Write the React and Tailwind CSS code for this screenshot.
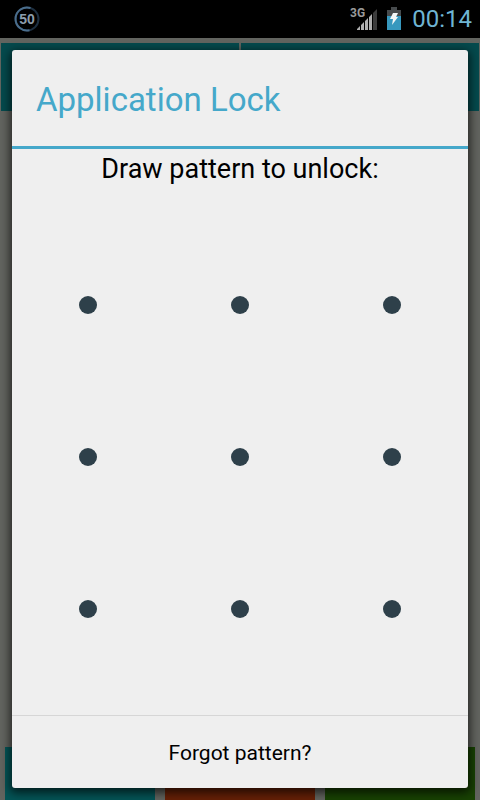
import React, { useState } from 'react';

const NODES = [1, 2, 3, 4, 5, 6, 7, 8, 9];

function StatusBar() {
    return (
        <header className="relative z-10 flex h-[38px] items-center justify-between bg-black px-2">
            {/* BATTERY PERCENT RING */}
            <svg className="ml-1 h-7 w-7" viewBox="0 0 28 28" fill="none" role="img" aria-label="Battery level">
                <circle cx="15" cy="14" r="11.5" stroke="#1d2f40" strokeWidth="2" />
                <path d="M18.5 3A11.5 11.5 0 1 0 17.5 25.2" stroke="#4a6d8c" strokeWidth="2" />
                <text x="15" y="19" textAnchor="middle" fontSize="14" fontWeight="700" fontFamily="'Liberation Sans', sans-serif" fill="#8c9cab">50</text>
            </svg>

            <div className="flex items-center">
                {/* SIGNAL */}
                <svg className="h-7 w-8" viewBox="0 0 32 28" role="img" aria-label="Mobile signal">
                    <text x="4" y="12" fontSize="12" fontWeight="700" fontFamily="Roboto, sans-serif" fill="#9a9a9a">3G</text>
                    <path d="M11 25v-1l3-3v4zM15 25v-5l3-3v8zM19 25v-9l3-3v12zM23 25V12l3-3v16z" fill="#b0b0b0" />
                    <path d="M27 25V8l4-4v21z" fill="#3c3c3c" />
                </svg>

                {/* BATTERY */}
                <svg className="ml-2 h-7 w-4" viewBox="0 0 16 28" role="img" aria-label="Battery charging">
                    <path d="M5 2h6v3h4v10H1V5h4z" fill="#474b4d" />
                    <path d="M1 11h14v14H1z" fill="#3798be" />
                    <path d="M7 8h5l-2 4h2l-6 8 1-6H4z" fill="#f4f8f8" />
                </svg>

                <time className="ml-[10px] font-[Roboto,sans-serif] text-2xl text-[#6fb5d3]">00:14</time>
            </div>
        </header>
    );
}

// Dimmed screen that stays visible around the dialog
function Backdrop() {
    return (
        <div className="flex flex-1 flex-col justify-between bg-[#62645f] pt-[5px]" aria-hidden="true">
            <div className="flex h-[68px] gap-[2px] px-px">
                <div className="flex-1 bg-[#054a4d]" />
                <div className="flex-1 bg-[#054a4d]" />
            </div>
            <div className="flex h-[53px] gap-[10px] px-[5px]">
                <div className="flex-1 bg-[#045456]" />
                <div className="flex-1 bg-[#662006]" />
                <div className="flex-1 bg-[#184203]" />
            </div>
        </div>
    );
}

function PatternDialog() {
    const [pattern, setPattern] = useState([]);

    const addNode = (node) => {
        setPattern((prev) => (prev.includes(node) ? prev : [...prev, node]));
    };

    return (
        <section
            role="dialog"
            aria-labelledby="lock-title"
            className="flex w-full flex-col overflow-hidden rounded-[3px] bg-[#efefef] shadow-[0_3px_10px_2px_rgba(0,0,0,0.65)]"
        >
            {/* TITLE */}
            <div className="flex h-[99px] items-center border-b-[3px] border-[#45a8ca] px-6 pt-1">
                <h1 id="lock-title" className="text-[33px] leading-10 text-[#45a8ca]">Application Lock</h1>
            </div>

            {/* PATTERN */}
            <div className="flex flex-1 flex-col justify-between pb-[30px]">
                <p className="text-center text-[27px] leading-10 text-black">Draw pattern to unlock:</p>
                <div className="grid aspect-square w-full grid-cols-3">
                    {NODES.map((node) => (
                        <button
                            key={node}
                            type="button"
                            aria-label={`Dot ${node}`}
                            aria-pressed={pattern.includes(node)}
                            onClick={() => addNode(node)}
                            className="flex items-center justify-center"
                        >
                            <span className="h-[18px] w-[18px] rounded-full bg-[#2e404a]" />
                        </button>
                    ))}
                </div>
            </div>

            {/* FOOTER */}
            <button
                type="button"
                onClick={() => setPattern([])}
                className="h-[73px] border-t border-[#d6d6d6] pt-[3px] text-[21px] text-black"
            >
                Forgot pattern?
            </button>
        </section>
    );
}

function App() {
    return (
        <div className="relative flex min-h-screen flex-col bg-black font-[Roboto,sans-serif]">
            <StatusBar />
            <Backdrop />
            <div className="absolute inset-0 flex px-3 pt-[50px] pb-3">
                <PatternDialog />
            </div>
        </div>
    );
}

export default App;
